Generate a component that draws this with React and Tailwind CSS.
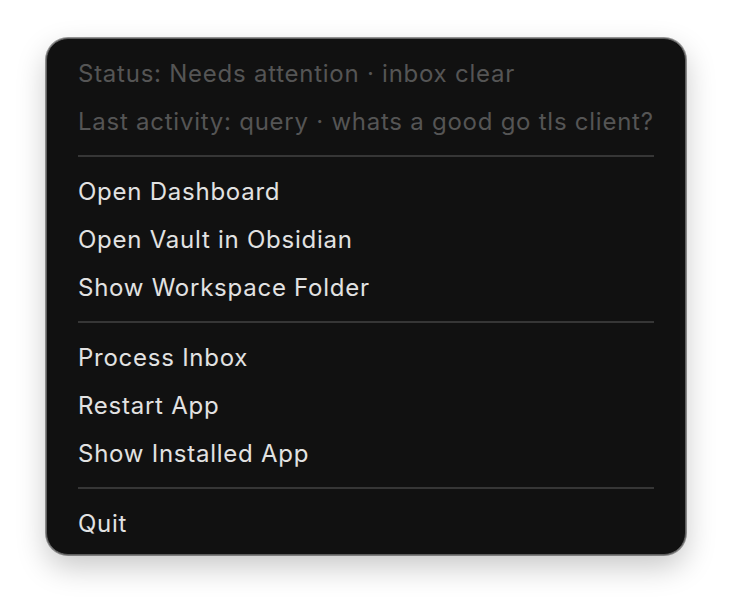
export default function App() {
  const Item = ({ children, muted }) => (
    <div
      className={`h-[48px] flex items-center px-[31px] pt-[2px] text-[24px] leading-none tracking-[0.75px] ${
        muted ? "text-[#555555]" : "text-[#e2e2e2]"
      }`}
    >
      {children}
    </div>
  );
  const Sep = () => (
    <div className="h-[22px] flex items-center px-[31px]">
      <div className="h-[2px] w-full bg-[#363636]" />
    </div>
  );
  return (
    <div className="w-[732px] h-[610px] bg-white flex items-start justify-center pt-[38px]" style={{ fontFamily: "Inter, 'Noto Sans', sans-serif" }}>
      <div className="w-[640px] h-[517px] rounded-[22px] bg-[#111111] border border-[#5e5e5e] ring-1 ring-black/40 shadow-[0_12px_30px_rgba(0,0,0,0.22)] py-[10px] box-border">
        <Item muted>Status: Needs attention · inbox clear</Item>
        <Item muted>Last activity: query · whats a good go tls client?</Item>
        <Sep />
        <Item>Open Dashboard</Item>
        <Item>Open Vault in Obsidian</Item>
        <Item>Show Workspace Folder</Item>
        <Sep />
        <Item>Process Inbox</Item>
        <Item>Restart App</Item>
        <Item>Show Installed App</Item>
        <Sep />
        <Item>Quit</Item>
      </div>
    </div>
  );
}
